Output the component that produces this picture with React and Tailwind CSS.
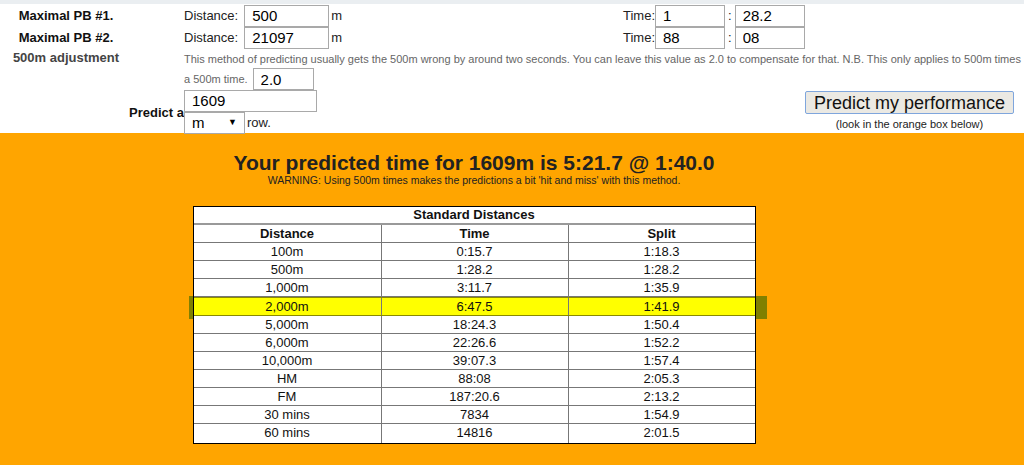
import React from 'react';

const rows = [
  ['100m', '0:15.7', '1:18.3'],
  ['500m', '1:28.2', '1:28.2'],
  ['1,000m', '3:11.7', '1:35.9'],
  ['2,000m', '6:47.5', '1:41.9'],
  ['5,000m', '18:24.3', '1:50.4'],
  ['6,000m', '22:26.6', '1:52.2'],
  ['10,000m', '39:07.3', '1:57.4'],
  ['HM', '88:08', '2:05.3'],
  ['FM', '187:20.6', '2:13.2'],
  ['30 mins', '7834', '1:54.9'],
  ['60 mins', '14816', '2:01.5'],
];

// highlighted row is the one closest to the predicted distance
const HIGHLIGHT = '2,000m';

const Field = ({ value, width }) => (
  <input
    readOnly
    value={value}
    className={`${width} h-[22px] shrink-0 border border-[#a9a9a9] bg-white px-[7px] text-[15px] text-black outline-none`}
  />
);

const PbRow = ({ label, distance, mins, secs }) => (
  <div className="flex h-[22px] items-center">
    <div className="w-[184px] shrink-0">
      <div className="w-[132px] text-center font-bold text-[13px] text-[#111]">{label}</div>
    </div>
    <div className="flex w-[439px] shrink-0 items-center text-[13px] text-[#222]">
      <span className="mr-[6px]">Distance:</span>
      <Field value={distance} width="w-[85px]" />
      <span className="ml-[2px]">m</span>
    </div>
    <div className="flex items-center text-[13px] text-[#222]">
      <span>Time:</span>
      <Field value={mins} width="w-[70px]" />
      <span className="mx-[3px]">:</span>
      <Field value={secs} width="w-[70px]" />
    </div>
  </div>
);

const App = () => {
  return (
    <div className="w-[1024px] h-[465px] overflow-hidden bg-white font-['Liberation_Sans',Arial,sans-serif]">
      <div className="h-[4px] bg-[#eaeef1]" />

      {/* inputs */}
      <div className="h-[129px] pt-[1px]">
        <PbRow label="Maximal PB #1." distance="500" mins="1" secs="28.2" />
        <PbRow label="Maximal PB #2." distance="21097" mins="88" secs="08" />

        <div className="flex h-[41px]">
          <div className="w-[184px] shrink-0 pt-[1px]">
            <div className="w-[132px] text-center font-bold text-[13px] leading-[15px] text-[#444]">500m adjustment</div>
          </div>
          <div className="w-[900px] shrink-0 pt-[1px] text-[11px] leading-[18px] text-[#666]">
            This method of predicting usually gets the 500m wrong by around two seconds. You can leave this value as 2.0 to compensate for that. N.B. This only applies to 500m times
            <div className="flex items-center">
              a 500m time.
              <span className="ml-[5px]">
                <Field value="2.0" width="w-[61px]" />
              </span>
            </div>
          </div>
        </div>

        <div className="flex items-start">
          <div className="w-[184px] shrink-0 pt-[13px] text-right font-bold text-[13px] text-[#111]">Predict a</div>
          <div className="flex flex-col">
            <Field value="1609" width="w-[133px]" />
            <div className="flex items-center">
              <div className="flex h-[22px] w-[61px] items-center justify-between border border-[#a9a9a9] bg-white px-[7px] text-[15px]">
                <span>m</span>
                <span className="text-[9px]">▼</span>
              </div>
              <span className="ml-[2px] text-[13px] text-[#222]">row.</span>
            </div>
          </div>
          <div className="ml-auto mr-[10px] mt-[1px] flex flex-col items-center">
            <button className="h-[23px] w-[209px] rounded-[2px] border border-[#7fa6dd] bg-[#ebe9e3] text-[18px] leading-none text-[#111]">
              Predict my performance
            </button>
            <div className="mt-[2px] text-[11px] text-[#222]">(look in the orange box below)</div>
          </div>
        </div>
      </div>

      {/* result box */}
      <div className="h-[332px] bg-[#ffa500]">
        <div className="flex w-[948px] flex-col items-center">
          <div className="mt-[19px] text-[21px] font-bold leading-[22px] text-[#222]">
            Your predicted time for 1609m is 5:21.7 @ 1:40.0
          </div>
          <div className="text-[10.5px] leading-[12px] text-[#222]">
            WARNING: Using 500m times makes the predictions a bit 'hit and miss' with this method.
          </div>

          <div className="relative mt-[20px]">
            <div className="w-[563px] border border-black bg-white text-[13px] text-[#111]">
              <div className="h-[18px] border-b-2 border-[#999] text-center font-bold leading-[16px]">Standard Distances</div>
              <div className="grid h-[18px] grid-cols-3 border-b border-[#777] font-bold leading-[17px]">
                <div className="text-center">Distance</div>
                <div className="border-l border-[#777] text-center">Time</div>
                <div className="border-l border-[#777] text-center">Split</div>
              </div>
              {rows.map((r, i) => {
                const hi = r[0] === HIGHLIGHT;
                const last = i === rows.length - 1;
                return (
                  <div
                    key={r[0]}
                    className={`grid grid-cols-3 leading-[17px] ${last ? 'h-[19px]' : 'border-b'} ${hi ? 'h-[19px] bg-[#ffff00] border-y border-[#8a8a00]' : last ? '' : 'h-[18px] border-[#777]'}`}
                  >
                    <div className="text-center">{r[0]}</div>
                    <div className="border-l border-[#777] text-center">{r[1]}</div>
                    <div className="border-l border-[#777] text-center">{r[2]}</div>
                  </div>
                );
              })}
            </div>
            {/* row highlight marker bleeding past the table edges */}
            <div className="absolute left-[-4px] top-[90px] h-[23px] w-[4px] bg-[#808000]" />
            <div className="absolute right-[-11px] top-[90px] h-[23px] w-[11px] bg-[#808000]" />
          </div>
        </div>
      </div>
    </div>
  );
};

export default App;
